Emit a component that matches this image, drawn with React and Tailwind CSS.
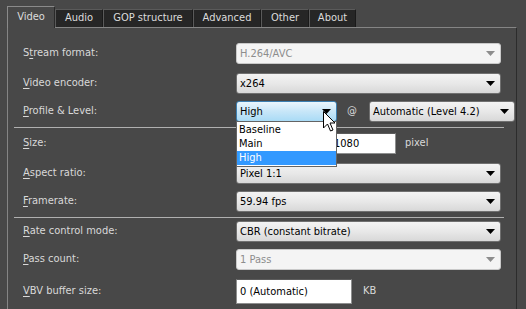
import React from "react";

const FONT = "font-['DejaVu_Sans_Condensed','DejaVu_Sans',sans-serif]";

function Label({ pre, u, post, w = "w-[213px]" }) {
  return (
    <div className={`${w} shrink-0 text-[#d9d9d9]`}>
      {pre}
      <span className="underline underline-offset-[2px] decoration-[#d9d9d9]">{u}</span>
      {post}
    </div>
  );
}

function Arrow({ color }) {
  return (
    <svg width="9" height="5" viewBox="0 0 9 5" className="shrink-0">
      <polygon points="0,0 9,0 4.5,5" fill={color} />
    </svg>
  );
}

function Combo({ text, w = "w-[265px]", disabled = false, hot = false, h = "h-[21px]" }) {
  let cls;
  if (disabled) {
    cls = "bg-[#f4f4f4] border-[#c9c9c9] text-[#8d8d8d]";
  } else if (hot) {
    cls = "bg-gradient-to-b from-[#eaf6fd] via-[#c7e6f8] to-[#a9dbf6] border-[#3c7fb1] text-black";
  } else {
    cls = "bg-gradient-to-b from-[#f3f3f3] via-[#e8e8e8] to-[#d8d8d8] border-[#707070] text-black";
  }
  return (
    <div className={`${w} ${h} ${cls} shrink-0 border rounded-[3px] flex items-center justify-between pl-[3px] pr-[5px]`}>
      <span className="whitespace-nowrap leading-none">{text}</span>
      <Arrow color={disabled ? "#8d8d8d" : "#000"} />
    </div>
  );
}

function TextBox({ text, w, h = "h-[21px]" }) {
  return (
    <div className={`${w} ${h} shrink-0 bg-white border border-[#8e8f8f] border-t-[#5c5c5c] flex items-center pl-[3px] text-black`}>
      <span className="leading-none">{text}</span>
    </div>
  );
}

function Tab({ label, active, w }) {
  if (active) {
    return (
      <div className={`${w} h-[22px] relative z-10 -mb-px bg-[#484848] border-t border-l border-[#8a8a8a] border-r border-r-[#2a2a2a] flex items-center justify-center text-[#dcdcdc]`}>
        {label}
      </div>
    );
  }
  return (
    <div className={`${w} h-[18px] bg-[#262626] border-t border-l border-[#5a5a5a] border-r border-r-[#1a1a1a] flex items-center justify-center text-[#dcdcdc]`}>
      {label}
    </div>
  );
}

export default function App() {
  return (
    <div className={`relative w-[526px] h-[309px] overflow-hidden bg-[#484848] text-[11px] ${FONT}`}>
      <div className="flex items-end h-[27px] pl-[7px]">
        <Tab label="Video" active w="w-[48px]" />
        <Tab label="Audio" w="w-[48px]" />
        <Tab label="GOP structure" w="w-[90px]" />
        <Tab label="Advanced" w="w-[68px]" />
        <Tab label="Other" w="w-[48px]" />
        <Tab label="About" w="w-[47px]" />
      </div>
      <div className="ml-[7px] w-[510px] h-[290px] border-t border-l border-[#858585] border-r border-r-[#2c2c2c] pl-[15px] flex flex-col">
        <div className="flex items-center h-[21px] mt-[15px]">
          <Label pre="S" u="t" post="ream format:" />
          <Combo text="H.264/AVC" disabled />
        </div>
        <div className="flex items-center h-[21px] mt-[9px]">
          <Label pre="" u="V" post="ideo encoder:" />
          <Combo text="x264" />
        </div>
        <div className="flex items-center h-[21px] mt-[7px]">
          <Label pre="" u="P" post="rofile & Level:" />
          <Combo text="High" w="w-[101px]" hot />
          <span className="ml-[10px] w-[22px] text-[#d9d9d9]">@</span>
          <Combo text="Automatic (Level 4.2)" w="w-[146px]" />
        </div>
        <div className="ml-[-9px] w-[490px] mt-[5px] border-t border-[#b0b0b0]" />
        <div className="flex items-center h-[21px] mt-[5px]">
          <Label pre="" u="S" post="ize:" />
          <TextBox text="" w="w-[79px]" />
          <span className="w-[15px]" />
          <TextBox text="1080" w="w-[66px]" />
          <span className="ml-[9px] text-[#d9d9d9]">pixel</span>
        </div>
        <div className="flex items-center h-[21px] mt-[9px]">
          <Label pre="" u="A" post="spect ratio:" />
          <Combo text="Pixel 1:1" />
        </div>
        <div className="flex items-center h-[21px] mt-[7px]">
          <Label pre="" u="F" post="ramerate:" />
          <Combo text="59.94 fps" />
        </div>
        <div className="ml-[-9px] w-[490px] mt-[5px] border-t border-[#b0b0b0]" />
        <div className="flex items-center h-[21px] mt-[3px]">
          <Label pre="" u="R" post="ate control mode:" />
          <Combo text="CBR (constant bitrate)" />
        </div>
        <div className="flex items-center h-[21px] mt-[7px]">
          <Label pre="" u="P" post="ass count:" />
          <Combo text="1 Pass" disabled />
        </div>
        <div className="flex items-center h-[25px] mt-[9px]">
          <Label pre="" u="V" post="BV buffer size:" />
          <TextBox text="0 (Automatic)" w="w-[116px]" h="h-[25px]" />
          <span className="ml-[11px] text-[#d9d9d9]">KB</span>
        </div>
      </div>

      {/* Open dropdown list */}
      <div className="absolute left-[236px] top-[121px] w-[101px] h-[46px] bg-white border border-[#646464] flex flex-col py-[1px] text-black">
        <div className="h-[14px] flex items-center pl-[2px]">Baseline</div>
        <div className="h-[14px] flex items-center pl-[2px]">Main</div>
        <div className="h-[14px] flex items-center pl-[2px] bg-[#3399ff] text-white">High</div>
      </div>

      {/* Mouse cursor */}
      <svg className="absolute left-[323px] top-[111px]" width="14" height="22" viewBox="0 0 14 22">
        <path d="M0.5,0.5 L0.5,17 L4.5,13 L7.5,20 L10,19 L7,12 L12,12 Z" fill="#fff" stroke="#000" strokeWidth="1" strokeLinejoin="miter" />
      </svg>
    </div>
  );
}
